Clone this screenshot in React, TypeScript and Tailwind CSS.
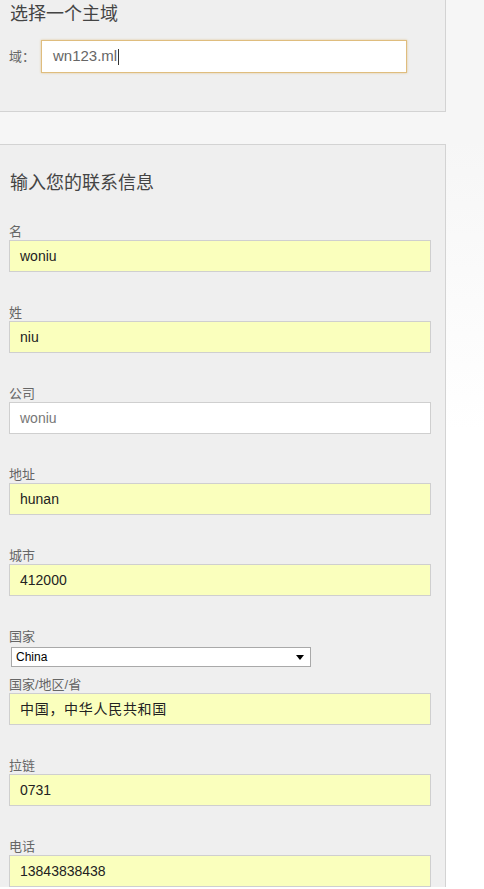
import React from 'react'

type Field = {
  label: string
  value: string
  autofill?: boolean
  wide?: boolean
}

const topFields: Field[] = [
  { label: '名', value: 'woniu', autofill: true },
  { label: '姓', value: 'niu', autofill: true },
  { label: '公司', value: 'woniu' },
  { label: '地址', value: 'hunan', autofill: true },
  { label: '城市', value: '412000', autofill: true },
]

const bottomFields: Field[] = [
  { label: '国家/地区/省', value: '中国，中华人民共和国', autofill: true, wide: true },
  { label: '拉链', value: '0731', autofill: true },
  { label: '电话', value: '13843838438', autofill: true },
]

function FieldRow({ field }: { field: Field }) {
  return (
    <div className="mb-[33px]">
      <label className="block h-4 text-[13px] leading-4 text-[#666]">{field.label}</label>
      <div
        className={
          field.autofill
            ? 'flex h-8 w-[422px] items-center border border-[#cfcfcf] bg-[#faffbd] pl-[10px] text-[14px] text-[#222]'
            : 'flex h-8 w-[422px] items-center border border-[#cfcfcf] bg-white pl-[10px] text-[14px] text-[#777]'
        }
      >
        <span className={field.wide ? 'tracking-[0.7px]' : ''}>{field.value}</span>
      </div>
    </div>
  )
}

export default function App() {
  return (
    <div
      className="min-h-screen bg-[linear-gradient(#f6f6f6_0px,#f6f6f6_140px,#ffffff_430px)]"
      style={{ fontFamily: '"Liberation Sans", Arial, "Noto Sans CJK SC", sans-serif' }}
    >
      {/* Domain panel */}
      <section className="h-[112px] w-[446px] border-r border-b border-[#d3d3d3] bg-[#efefef] pt-[2px]">
        <h2 className="pl-[10px] text-[18px] leading-6 font-normal text-[#444]">选择一个主域</h2>
        <div className="mt-[14px] flex items-center pl-[9px]">
          <span className="w-8 text-[13px] text-[#666]">域：</span>
          <div className="flex h-[33px] w-[366px] items-center border border-[#dfbd7e] bg-white pl-[11px] text-[15px] text-[#666] shadow-[0_0_2px_rgba(223,189,126,0.8)]">
            wn123.ml
            <span className="ml-px inline-block h-4 w-px bg-[#333]" />
          </div>
        </div>
      </section>

      {/* Contact panel */}
      <section className="mt-8 w-[446px] border-t border-r border-[#d3d3d3] bg-[#efefef] pt-[26px] pl-[9px]">
        <h2 className="pl-px text-[18px] leading-6 font-normal text-[#444]">输入您的联系信息</h2>
        <div className="mt-[29px]">
          {topFields.map((f) => (
            <FieldRow key={f.label} field={f} />
          ))}

          <div>
            <label className="block h-4 text-[13px] leading-4 text-[#666]">国家</label>
            <div className="mt-[2px] mb-[10px] ml-[2px] flex h-5 w-[300px] items-center justify-between border border-[#a9a9a9] bg-white pr-[6px] pl-[4px] text-[12px] text-black">
              <span>China</span>
              <svg width="8" height="5" viewBox="0 0 8 5">
                <path d="M0 0h8L4 5z" fill="#000" />
              </svg>
            </div>
          </div>

          {bottomFields.map((f) => (
            <FieldRow key={f.label} field={f} />
          ))}
        </div>
      </section>
    </div>
  )
}
